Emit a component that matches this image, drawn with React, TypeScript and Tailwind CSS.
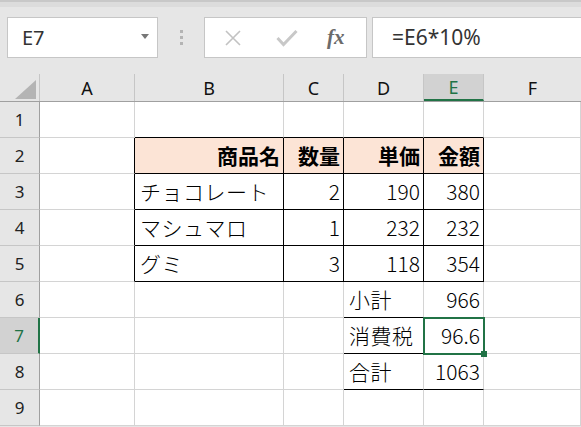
import React from "react";

const COLS = ["A", "B", "C", "D", "E", "F"];
const WIDTHS = ["w-[95px]", "w-[149px]", "w-[60px]", "w-[80px]", "w-[60px]", "flex-1"];

type Cell = { t?: string; align?: "l" | "r"; bold?: boolean };

const data: Record<number, Record<string, Cell>> = {
  2: {
    B: { t: "商品名", align: "r", bold: true },
    C: { t: "数量", align: "r", bold: true },
    D: { t: "単価", align: "r", bold: true },
    E: { t: "金額", align: "r", bold: true },
  },
  3: { B: { t: "チョコレート" }, C: { t: "2", align: "r" }, D: { t: "190", align: "r" }, E: { t: "380", align: "r" } },
  4: { B: { t: "マシュマロ" }, C: { t: "1", align: "r" }, D: { t: "232", align: "r" }, E: { t: "232", align: "r" } },
  5: { B: { t: "グミ" }, C: { t: "3", align: "r" }, D: { t: "118", align: "r" }, E: { t: "354", align: "r" } },
  6: { D: { t: "小計" }, E: { t: "966", align: "r" } },
  7: { D: { t: "消費税" }, E: { t: "96.6", align: "r" } },
  8: { D: { t: "合計" }, E: { t: "1063", align: "r" } },
};

function rightBlack(r: number, c: string) {
  return r >= 2 && r <= 5 && ["A", "B", "C", "D", "E"].includes(c);
}
function bottomBlack(r: number, c: string) {
  if (r >= 1 && r <= 5 && ["B", "C", "D", "E"].includes(c)) return true;
  if (r >= 6 && r <= 8 && ["D", "E"].includes(c)) return true;
  return false;
}

function XIcon() {
  return (
    <svg width="18" height="18" viewBox="0 0 18 18">
      <path d="M2 2 L16 16 M16 2 L2 16" stroke="#c2c2c2" strokeWidth="1.6" fill="none" />
    </svg>
  );
}
function CheckIcon() {
  return (
    <svg width="22" height="18" viewBox="0 0 22 18">
      <path d="M1.5 9 L7.5 15.5 L20.5 2" stroke="#c8c8c8" strokeWidth="3" fill="none" />
    </svg>
  );
}

export default function App() {
  const rows = [1, 2, 3, 4, 5, 6, 7, 8, 9];
  return (
    <div className="w-[581px] h-[427px] overflow-hidden bg-[#e6e6e6] select-none" style={{ fontFamily: "'Noto Sans', 'Noto Sans CJK JP', sans-serif" }}>
      {/* top strip */}
      <div className="h-[7px] bg-[#dcdcdc] border-t-2 border-[#c8c8c8]" />
      {/* formula bar */}
      <div className="flex items-stretch h-[41px] mt-[10px] mb-[16px]">
        <div className="ml-[7px] w-[151px] bg-white border border-[#c6c6c6] flex items-center justify-between pl-[14px] pr-[8px]">
          <span className="text-[20px] text-[#333] leading-none">E7</span>
          <svg width="8" height="5" viewBox="0 0 8 5" className="mb-[2px]">
            <path d="M0 0 L8 0 L4 5 Z" fill="#777" />
          </svg>
        </div>
        <div className="w-[46px] flex flex-col items-center justify-center gap-[3px]">
          <div className="w-[3px] h-[3px] bg-[#b4b4b4]" />
          <div className="w-[3px] h-[3px] bg-[#b4b4b4]" />
          <div className="w-[3px] h-[3px] bg-[#b4b4b4]" />
        </div>
        <div className="w-[163px] bg-white border border-[#c6c6c6] flex items-center">
          <div className="ml-[19px]"><XIcon /></div>
          <div className="ml-[34px]"><CheckIcon /></div>
          <span className="ml-[29px] text-[21px] text-[#6b6b6b] italic font-bold leading-none" style={{ fontFamily: "'Liberation Serif', serif" }}>fx</span>
        </div>
        <div className="ml-[5px] flex-1 bg-white border border-r-0 border-[#c6c6c6] flex items-center pl-[19px]">
          <span className="text-[21px] text-[#333] leading-none">=E6*10%</span>
        </div>
      </div>
      {/* sheet */}
      <div className="flex flex-col">
        {/* column headers */}
        <div className="flex h-[28px] border-b border-[#a0a0a0]">
          <div className="w-[40px] border-r border-[#c6c6c6] relative">
            <svg width="40" height="27" viewBox="0 0 40 27" className="absolute left-0 top-0">
              <path d="M15 25 L36 25 L36 6 Z" fill="#b4b4b4" />
            </svg>
          </div>
          {COLS.map((c, i) => (
            <div
              key={c}
              className={`${WIDTHS[i]} ${c === "F" ? "" : "border-r border-[#c6c6c6]"} ${c === "E" ? "bg-[#d2d2d2] text-[#217346] border-b-2 border-b-[#217346]" : "text-[#111]"} flex items-center justify-center text-[18px] leading-none`}
            >
              {c}
            </div>
          ))}
        </div>
        {rows.map((r) => (
          <div key={r} className={`flex h-[36px] relative ${r === 7 ? "z-10" : "z-0"}`}>
            <div
              className={`w-[40px] border-b border-[#c6c6c6] flex items-center justify-center text-[17px] leading-none ${r === 7 ? "bg-[#d2d2d2] text-[#217346] border-r-2 border-r-[#217346]" : "bg-[#e6e6e6] text-[#222] border-r border-r-[#a0a0a0]"}`}
            >
              {r}
            </div>
            {COLS.map((c, i) => {
              const cell = data[r]?.[c];
              const header = r === 2 && ["B", "C", "D", "E"].includes(c);
              const rb = rightBlack(r, c) ? "border-r-black" : "border-r-[#d4d4d4]";
              const bb = bottomBlack(r, c) ? "border-b-black" : "border-b-[#d4d4d4]";
              const sel = r === 7 && c === "E";
              return (
                <div
                  key={c}
                  className={`${WIDTHS[i]} relative ${sel ? "z-10" : ""} border-r border-b ${rb} ${bb} ${header ? "bg-[#fce4d6]" : "bg-white"} flex items-center ${cell?.align === "r" ? "justify-end pr-[3px]" : "justify-start pl-[5px]"} text-[21px] leading-none text-black ${cell?.bold ? "font-bold" : "font-light"}`}
                  style={{ fontFamily: "'Noto Sans CJK JP', 'Noto Sans', sans-serif" }}
                >
                  {cell?.t && <span className={cell.align === "r" ? "" : "tracking-[0.5px]"}>{cell.t}</span>}
                  {sel && (
                    <>
                      <div className="absolute left-[-1px] top-[-1px] w-[62px] h-[38px] border-2 border-[#217346]" />
                      <div className="absolute left-[57px] top-[33px] w-[6px] h-[6px] bg-[#217346]" />
                    </>
                  )}
                </div>
              );
            })}
          </div>
        ))}
      </div>
    </div>
  );
}
